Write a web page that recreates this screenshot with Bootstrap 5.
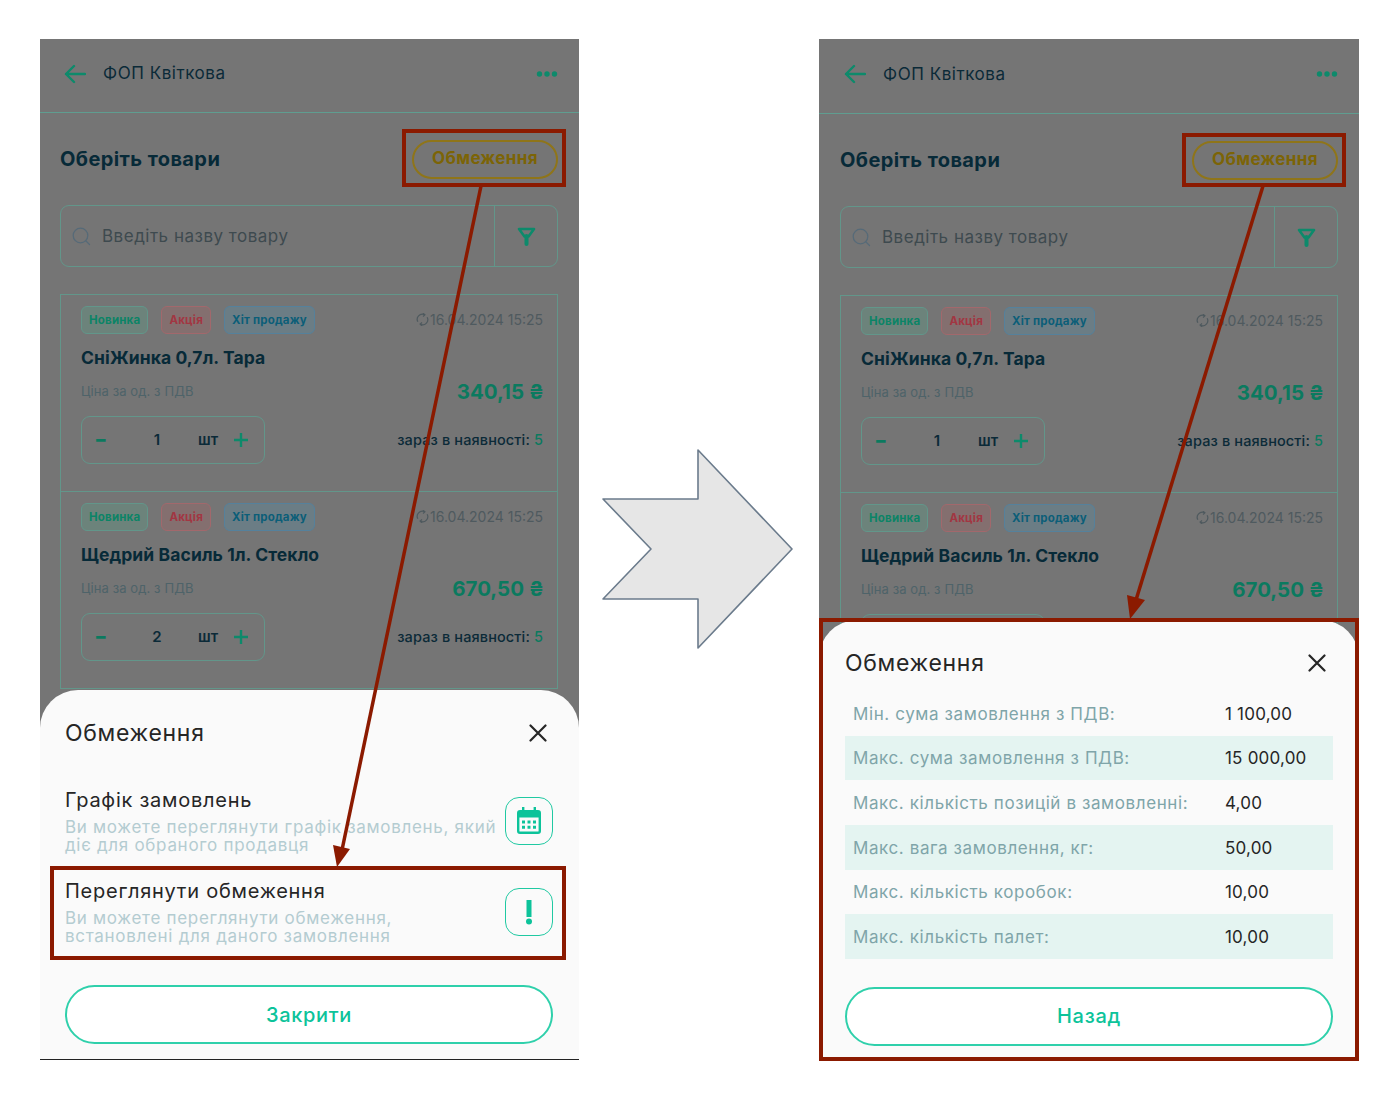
<!doctype html>
<html lang="uk"><head><meta charset="utf-8"><title>Обмеження</title>
<link href="https://cdn.jsdelivr.net/npm/bootstrap@5.3.0/dist/css/bootstrap.min.css" rel="stylesheet">
<style>
body{background:#fff;font-family:Inter,"Noto Sans",sans-serif;margin:0}
.stage{position:relative;width:1400px;height:1100px;padding:39px 0 0 40px;overflow:hidden}
.phone{position:relative;width:539px;height:1021px;background:#757575;overflow:hidden;flex:none;color:#0b2a38}
.phone-a{border-bottom:1px solid #222}
.phone-b{margin-left:25px;width:540px}
.arrow-shape{margin:410px 0 0 23px;flex:none}
.app-head{height:74px;padding:0 21px 4px 24px;border-bottom:1px solid #5f9d90}
.phone-b .app-head{height:75px;padding-left:25px}
.app-name{font-size:17px;margin-left:17px;line-height:1;letter-spacing:.55px}
.body-pad{padding:0 21px 0 20px}
.phone-b .body-pad{padding-left:21px}
.pick-row{height:92px}
.pick-title{font-size:20px;font-weight:700;color:#072a38;letter-spacing:.4px}
.limit-btn{width:146px;height:39px;border:2px solid #8f7519;border-radius:20px;color:#7c6406;font-size:17px;font-weight:700;background:transparent;padding:0;letter-spacing:.4px}
.search-box{height:62px;border:1.5px solid #62968a;border-radius:9px}
.search-text{font-size:17px;color:#3e4a4f;margin-left:11px;padding-top:2px;letter-spacing:.5px}
.search-main{padding-left:11px}
.filter-cell{width:63px;border-left:1.5px solid #62968a}
.goods{margin-top:27px;border:1.5px solid #62968a;border-bottom:0}
.good{height:197px;border-bottom:1.5px solid #62968a;padding:11px 13px 0 20px}
.tag{font-size:11.5px;font-weight:700;height:28px;border-radius:6px;border:1.5px solid;padding:0 7px;margin-right:13px;line-height:26px;letter-spacing:.2px}
.tag-new{color:#0b8466;background:#6c837b;border-color:#62968a}
.tag-sale{color:#a23642;background:#846f6f;border-color:#a2686c}
.tag-hit{color:#0b5e78;background:#6b7d85;border-color:#55819c}
.stamp{font-size:14px;color:#4f5a5f;gap:1px;margin:3px 1px 0 auto}
.good-name{font-size:17.5px;font-weight:700;margin-top:13px;line-height:22px;color:#072a38;letter-spacing:.1px}
.price-row{margin-top:5px;height:36px}
.price-cap{font-size:13px;color:#4e6369;letter-spacing:.1px}
.price-val{font-size:20.5px;font-weight:700;color:#0b7a5f}
.qty-row{margin-top:6px}
.qty{width:184px;height:48px;border:1.5px solid #62968a;border-radius:9px;padding-left:14px;font-size:15px;font-weight:600}
.qty-num{width:60px;text-align:center}
.qty-minus{width:31px;color:#0b7a5f;font-weight:900;font-size:19px}
.qty-unit{width:35px;margin-left:11px}
.stock{font-size:14.5px;color:#0b2a38;font-weight:500;letter-spacing:.12px;margin-right:1px}
.stock b{color:#0b7a5f;font-weight:500}
.sheet{position:absolute;left:0;right:0;bottom:0;background:#fafafa;border-radius:38px 38px 0 0;padding:0 26px 15px 25px;color:#222}
.phone-b .sheet{padding-left:26px}
.sheet-a{height:369px}
.sheet-b{height:440px}
.sheet-title{font-size:23px;font-weight:400;color:#262626;line-height:1;letter-spacing:.7px}
.sheet-head{height:85px;padding:1px 6px 0 0}
.phone-b .sheet-head{height:86px;padding:0 7px 0 0}
.opt{height:92px}
.opt-a{height:91px}
.opt-title{font-size:20px;font-weight:400;line-height:24px;color:#262626;letter-spacing:.75px}
.opt-desc{font-size:17px;line-height:18px;color:#b4ccd1;margin-top:6px;letter-spacing:.7px}
.icon-tile{width:48px;height:48px;border:1.5px solid #20c9a2;border-radius:14px;flex:none}
.wide-btn{height:59px;background:#fff;border:2px solid #2fd0ab;border-radius:30px;color:#0cc39a;font-size:20px;font-weight:500;width:100%;padding:0;letter-spacing:.7px}
.limits{margin-top:-15px}
.lim-row{height:44.67px;font-size:17px;font-weight:400;padding:2px 0 0 8px;letter-spacing:.6px}
.lim-row:nth-child(even){background:#e4f4f1}
.lim-name{width:372px;color:#7fa5a9}
.lim-val{color:#262626;letter-spacing:.2px}
.btn-a{margin-top:27px}
.btn-b{margin-top:28px}
.marks{position:absolute;left:0;top:0;pointer-events:none}
</style></head><body>
<div class="stage d-flex">

<div class="phone phone-a">
  <div class="app-head d-flex align-items-center">
    <svg width="22" height="20" viewBox="0 0 22 20" fill="none" stroke="#0d8a6b" stroke-width="2.400" stroke-linecap="round" stroke-linejoin="round"><path d="M21 10H2M10 2 2 10l8 8"/></svg>
    <span class="app-name">ФОП Квіткова</span>
    <svg class="ms-auto" width="22" height="8" viewBox="0 0 22 8" fill="#0d8a6b"><circle cx="3.500" cy="4" r="2.700"/><circle cx="11" cy="4" r="2.700"/><circle cx="18.500" cy="4" r="2.700"/></svg>
  </div>
  <div class="body-pad">
    <div class="pick-row d-flex justify-content-between align-items-center">
      <span class="pick-title">Оберіть товари</span>
      <button class="limit-btn">Обмеження</button>
    </div>
    <div class="search-box d-flex">
      <div class="search-main flex-grow-1 d-flex align-items-center">
        <svg width="19" height="19" viewBox="0 0 19 19" fill="none" stroke="#566a78" stroke-width="1.300"><circle cx="8.500" cy="8.500" r="7.300"/><path d="m14 14 3.500 3.500" stroke-linecap="round"/></svg>
        <span class="search-text">Введіть назву товару</span>
      </div>
      <div class="filter-cell d-flex align-items-center justify-content-center">
        <svg width="19" height="19" viewBox="0 0 19 19" fill="none" stroke="#0d8a6b" stroke-width="2.600" stroke-linejoin="round"><path d="M2 2h15l-5.500 7.500H7.500z"/><path d="M9.500 9v8" stroke-width="4" stroke-linecap="round"/></svg>
      </div>
    </div>
    <div class="goods">
      <div class="good">
        <div class="d-flex align-items-start">
          <span class="tag tag-new">Новинка</span><span class="tag tag-sale">Акція</span><span class="tag tag-hit">Хіт продажу</span>
          <span class="stamp d-flex align-items-center"><svg width="13" height="13" viewBox="0 0 14 14" fill="none" stroke="#4f5a5f" stroke-width="1.300"><path d="M2 9.500A5.500 5.500 0 0 1 9 1.800M12 4.500a5.500 5.500 0 0 1-7 7.700"/><path d="M7.500 .2 9.600 2 7.600 3.800M6.500 10.300 4.400 12l2 1.800"/></svg>16.04.2024 15:25</span>
        </div>
        <div class="good-name">СніЖинка 0,7л. Тара</div>
        <div class="price-row d-flex justify-content-between align-items-center"><span class="price-cap">Ціна за од. з ПДВ</span><span class="price-val">340,15 ₴</span></div>
        <div class="qty-row d-flex justify-content-between align-items-center">
          <div class="qty d-flex align-items-center"><span class="qty-minus">–</span><span class="qty-num">1</span><span class="qty-unit">шт</span><svg width="16" height="16" viewBox="0 0 16 16" stroke="#0d8a6b" stroke-width="2.400"><path d="M8 1v14M1 8h14"/></svg></div>
          <span class="stock">зараз в наявності: <b>5</b></span>
        </div>
      </div>
      <div class="good">
        <div class="d-flex align-items-start">
          <span class="tag tag-new">Новинка</span><span class="tag tag-sale">Акція</span><span class="tag tag-hit">Хіт продажу</span>
          <span class="stamp d-flex align-items-center"><svg width="13" height="13" viewBox="0 0 14 14" fill="none" stroke="#4f5a5f" stroke-width="1.300"><path d="M2 9.500A5.500 5.500 0 0 1 9 1.800M12 4.500a5.500 5.500 0 0 1-7 7.700"/><path d="M7.500 .2 9.600 2 7.600 3.800M6.500 10.300 4.400 12l2 1.800"/></svg>16.04.2024 15:25</span>
        </div>
        <div class="good-name">Щедрий Василь 1л. Стекло</div>
        <div class="price-row d-flex justify-content-between align-items-center"><span class="price-cap">Ціна за од. з ПДВ</span><span class="price-val">670,50 ₴</span></div>
        <div class="qty-row d-flex justify-content-between align-items-center">
          <div class="qty d-flex align-items-center"><span class="qty-minus">–</span><span class="qty-num">2</span><span class="qty-unit">шт</span><svg width="16" height="16" viewBox="0 0 16 16" stroke="#0d8a6b" stroke-width="2.400"><path d="M8 1v14M1 8h14"/></svg></div>
          <span class="stock">зараз в наявності: <b>5</b></span>
        </div>
      </div>
    </div>
  </div>
  <div class="sheet sheet-a">
    <div class="sheet-head d-flex justify-content-between align-items-center">
      <span class="sheet-title">Обмеження</span>
      <svg width="18" height="18" viewBox="0 0 18 18" stroke="#262626" stroke-width="2.200" stroke-linecap="round"><path d="m1.500 1.500 15 15M16.500 1.500l-15 15"/></svg>
    </div>
    <div class="opt opt-a d-flex align-items-center justify-content-between">
      <div><div class="opt-title">Графік замовлень</div><div class="opt-desc">Ви можете переглянути графік замовлень, який<br>діє для обраного продавця</div></div>
      <div class="icon-tile d-flex align-items-center justify-content-center">
        <svg width="24" height="27" viewBox="0 0 24 27"><path fill="#0cc39a" fill-rule="evenodd" d="M5 0h2.400v3h9.200V0H19v3h2a3 3 0 0 1 3 3v18a3 3 0 0 1-3 3H3a3 3 0 0 1-3-3V6a3 3 0 0 1 3-3h2zM2.400 10.500V24a.6.6 0 0 0 .6.6h18a.6.6 0 0 0 .6-.6V10.500z"/><path fill="#0cc39a" d="M5 13.500h3v3H5zM10.500 13.500h3v3h-3zM16 13.500h3v3h-3zM5 18.800h3v3H5zM10.500 18.800h3v3h-3zM16 18.800h3v3h-3z"/></svg>
      </div>
    </div>
    <div class="opt d-flex align-items-center justify-content-between">
      <div><div class="opt-title">Переглянути обмеження</div><div class="opt-desc">Ви можете переглянути обмеження,<br>встановлені для даного замовлення</div></div>
      <div class="icon-tile d-flex align-items-center justify-content-center">
        <svg width="8" height="25" viewBox="0 0 8 25" fill="#0cc39a"><path d="M1.500 0h5v17h-5z"/><circle cx="4" cy="21.500" r="3"/></svg>
      </div>
    </div>
    <button class="wide-btn btn-a">Закрити</button>
  </div>
</div>

<svg class="arrow-shape" width="192" height="200" viewBox="0 0 192 200"><path d="M1 50H96V1L190 100 96 199V150H1L49 100z" fill="#e6e6e6" stroke="#6b7b8c" stroke-width="1.600" stroke-linejoin="round"/></svg>

<div class="phone phone-b">
  <div class="app-head d-flex align-items-center">
    <svg width="22" height="20" viewBox="0 0 22 20" fill="none" stroke="#0d8a6b" stroke-width="2.400" stroke-linecap="round" stroke-linejoin="round"><path d="M21 10H2M10 2 2 10l8 8"/></svg>
    <span class="app-name">ФОП Квіткова</span>
    <svg class="ms-auto" width="22" height="8" viewBox="0 0 22 8" fill="#0d8a6b"><circle cx="3.500" cy="4" r="2.700"/><circle cx="11" cy="4" r="2.700"/><circle cx="18.500" cy="4" r="2.700"/></svg>
  </div>
  <div class="body-pad">
    <div class="pick-row d-flex justify-content-between align-items-center">
      <span class="pick-title">Оберіть товари</span>
      <button class="limit-btn">Обмеження</button>
    </div>
    <div class="search-box d-flex">
      <div class="search-main flex-grow-1 d-flex align-items-center">
        <svg width="19" height="19" viewBox="0 0 19 19" fill="none" stroke="#566a78" stroke-width="1.300"><circle cx="8.500" cy="8.500" r="7.300"/><path d="m14 14 3.500 3.500" stroke-linecap="round"/></svg>
        <span class="search-text">Введіть назву товару</span>
      </div>
      <div class="filter-cell d-flex align-items-center justify-content-center">
        <svg width="19" height="19" viewBox="0 0 19 19" fill="none" stroke="#0d8a6b" stroke-width="2.600" stroke-linejoin="round"><path d="M2 2h15l-5.500 7.500H7.500z"/><path d="M9.500 9v8" stroke-width="4" stroke-linecap="round"/></svg>
      </div>
    </div>
    <div class="goods">
      <div class="good">
        <div class="d-flex align-items-start">
          <span class="tag tag-new">Новинка</span><span class="tag tag-sale">Акція</span><span class="tag tag-hit">Хіт продажу</span>
          <span class="stamp d-flex align-items-center"><svg width="13" height="13" viewBox="0 0 14 14" fill="none" stroke="#4f5a5f" stroke-width="1.300"><path d="M2 9.500A5.500 5.500 0 0 1 9 1.800M12 4.500a5.500 5.500 0 0 1-7 7.700"/><path d="M7.500 .2 9.600 2 7.600 3.800M6.500 10.300 4.400 12l2 1.800"/></svg>16.04.2024 15:25</span>
        </div>
        <div class="good-name">СніЖинка 0,7л. Тара</div>
        <div class="price-row d-flex justify-content-between align-items-center"><span class="price-cap">Ціна за од. з ПДВ</span><span class="price-val">340,15 ₴</span></div>
        <div class="qty-row d-flex justify-content-between align-items-center">
          <div class="qty d-flex align-items-center"><span class="qty-minus">–</span><span class="qty-num">1</span><span class="qty-unit">шт</span><svg width="16" height="16" viewBox="0 0 16 16" stroke="#0d8a6b" stroke-width="2.400"><path d="M8 1v14M1 8h14"/></svg></div>
          <span class="stock">зараз в наявності: <b>5</b></span>
        </div>
      </div>
      <div class="good">
        <div class="d-flex align-items-start">
          <span class="tag tag-new">Новинка</span><span class="tag tag-sale">Акція</span><span class="tag tag-hit">Хіт продажу</span>
          <span class="stamp d-flex align-items-center"><svg width="13" height="13" viewBox="0 0 14 14" fill="none" stroke="#4f5a5f" stroke-width="1.300"><path d="M2 9.500A5.500 5.500 0 0 1 9 1.800M12 4.500a5.500 5.500 0 0 1-7 7.700"/><path d="M7.500 .2 9.600 2 7.600 3.800M6.500 10.300 4.400 12l2 1.800"/></svg>16.04.2024 15:25</span>
        </div>
        <div class="good-name">Щедрий Василь 1л. Стекло</div>
        <div class="price-row d-flex justify-content-between align-items-center"><span class="price-cap">Ціна за од. з ПДВ</span><span class="price-val">670,50 ₴</span></div>
        <div class="qty-row d-flex justify-content-between align-items-center">
          <div class="qty"></div>
        </div>
      </div>
    </div>
  </div>
  <div class="sheet sheet-b">
    <div class="sheet-head d-flex justify-content-between align-items-center">
      <span class="sheet-title">Обмеження</span>
      <svg width="18" height="18" viewBox="0 0 18 18" stroke="#262626" stroke-width="2.200" stroke-linecap="round"><path d="m1.500 1.500 15 15M16.500 1.500l-15 15"/></svg>
    </div>
    <div class="limits">
      <div class="lim-row d-flex align-items-center"><span class="lim-name">Мін. сума замовлення з ПДВ:</span><span class="lim-val">1 100,00</span></div>
      <div class="lim-row d-flex align-items-center"><span class="lim-name">Макс. сума замовлення з ПДВ:</span><span class="lim-val">15 000,00</span></div>
      <div class="lim-row d-flex align-items-center"><span class="lim-name">Макс. кількість позицій в замовленні:</span><span class="lim-val">4,00</span></div>
      <div class="lim-row d-flex align-items-center"><span class="lim-name">Макс. вага замовлення, кг:</span><span class="lim-val">50,00</span></div>
      <div class="lim-row d-flex align-items-center"><span class="lim-name">Макс. кількість коробок:</span><span class="lim-val">10,00</span></div>
      <div class="lim-row d-flex align-items-center"><span class="lim-name">Макс. кількість палет:</span><span class="lim-val">10,00</span></div>
    </div>
    <button class="wide-btn btn-b">Назад</button>
  </div>
</div>

<svg class="marks" width="1400" height="1100" viewBox="0 0 1400 1100" fill="none" stroke="#8b1a00" stroke-width="4">
  <rect x="404" y="131" width="160" height="54"/>
  <rect x="52" y="868" width="512" height="90"/>
  <path d="M481 186 342 850" stroke-width="3.500"/>
  <path d="M337 867 333 845 350 849z" fill="#8b1a00" stroke="none"/>
  <rect x="1184" y="135" width="160" height="50"/>
  <rect x="821" y="620" width="536" height="439"/>
  <path d="M1263 186 1136 600" stroke-width="3.500"/>
  <path d="M1130 619 1127 595 1145 600z" fill="#8b1a00" stroke="none"/>
</svg>
</div>
<script src="https://cdn.jsdelivr.net/npm/bootstrap@5.3.0/dist/js/bootstrap.bundle.min.js"></script>
</body></html>
